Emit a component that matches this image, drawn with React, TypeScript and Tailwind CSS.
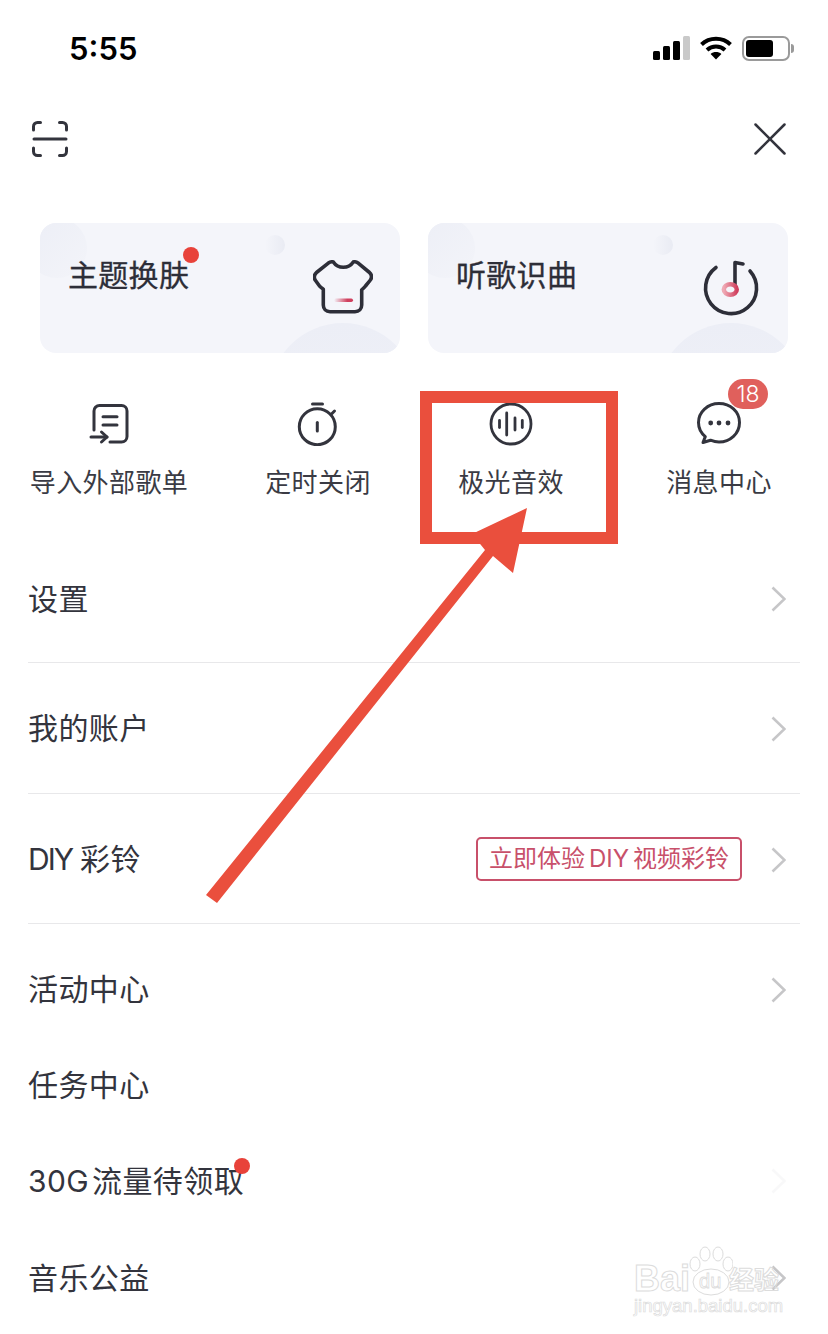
const FONT = "font-['Inter','Noto_Sans_CJK_SC',sans-serif]";

function Chevron({ faint, className = "" }: { faint?: boolean; className?: string }) {
  return (
    <svg width="15" height="26" viewBox="0 0 15 26" fill="none" className={`${faint ? "opacity-10" : ""} ${className}`}>
      <path d="M1.5 1.5 13.500 13 1.5 24.5" stroke="#c6c6c8" strokeWidth="2.6" />
    </svg>
  );
}

function StatusBar() {
  return (
    <div className="flex h-[96px] items-center justify-between pl-[69px] pr-[34px]">
      <span className="font-['Inter',sans-serif] text-[31px] font-semibold leading-none text-black">5:55</span>
      <div className="flex items-center gap-[10px]">
        <svg width="37" height="24" viewBox="0 0 37 24">
          <rect x="0" y="15" width="7" height="9" rx="1.5" fill="#000" />
          <rect x="10" y="10" width="7" height="14" rx="1.5" fill="#000" />
          <rect x="20" y="5" width="7" height="19" rx="1.5" fill="#000" />
          <rect x="30" y="0" width="7" height="24" rx="1.5" fill="#c9c9c9" />
        </svg>
        <svg width="32" height="24" viewBox="0 0 32 24" fill="none" stroke="#000" strokeWidth="4">
          <path d="M1.5 8.5C9.5 .8 22.5 .8 30.5 8.5" />
          <path d="M7 14c5-4.600 13-4.600 18 0" />
          <path d="M16 23.500 10.600 18c3-2.600 7.800-2.600 10.800 0L16 23.500z" fill="#000" stroke="none" />
        </svg>
        <div className="flex items-center">
          <div className="flex h-[25px] w-[48px] items-center rounded-[7px] border-2 border-[#9a9a9a] p-[2px]">
            <div className="h-full w-[27px] rounded-[3px] bg-black" />
          </div>
          <div className="ml-[1px] h-[9px] w-[3px] rounded-r-full bg-[#9a9a9a]" />
        </div>
      </div>
    </div>
  );
}

function TopBar() {
  return (
    <div className="flex h-[86px] items-center justify-between pl-[32px] pr-[42px]">
      <svg width="36" height="36" viewBox="0 0 36 36" fill="none" stroke="#33343d" strokeWidth="3" strokeLinecap="round">
        <path d="M1.500 9V5.500a4 4 0 0 1 4-4H8.500" />
        <path d="M27.500 1.500h3a4 4 0 0 1 4 4V9" />
        <path d="M1.500 27v3.500a4 4 0 0 0 4 4H8.500" />
        <path d="M27.500 34.500h3a4 4 0 0 0 4-4V27" />
        <path d="M2 18h32" />
      </svg>
      <svg width="32" height="32" viewBox="0 0 32 32" fill="none" stroke="#33343d" strokeWidth="2.500" strokeLinecap="round">
        <path d="M1.500 1.500 30.500 30.500" />
        <path d="M30.500 1.500 1.500 30.500" />
      </svg>
    </div>
  );
}

function ShirtIcon() {
  return (
    <svg width="60" height="54" viewBox="0 0 60 54" fill="none" className="mt-[37px]">
      <defs>
        <linearGradient id="dash" x1="0" x2="1" y1="0" y2="0">
          <stop offset="0" stopColor="#d0405e" stopOpacity="0" />
          <stop offset="0.7" stopColor="#d0405e" />
        </linearGradient>
      </defs>
      <path
        d="M20.300 2C23 6 26 7.300 30.300 7.300S37.600 6 40.300 2C42 1.300 44 2.300 45.500 3.300L56.500 12.500C59 15 59 18 57 20.500L52.500 26C51 28 49 29.500 48.700 30V45C48.700 49 46 51.700 42 51.700H17C13 51.700 10.300 49 10.300 45V29.300C10 29 8 27.500 6.500 26L2.500 20.500C.7 18 1 15 3.500 12.500L15 3.300C16.500 2.300 18.500 1.300 20.300 2Z"
        stroke="#2d2e38"
        strokeWidth="3.600"
        strokeLinejoin="round"
      />
      <rect x="21" y="38.500" width="19" height="3.500" rx="1.700" fill="url(#dash)" />
    </svg>
  );
}

function DiscIcon() {
  return (
    <svg width="62" height="62" viewBox="0 0 62 62" fill="none" className="mt-[35px] mr-[-1px]">
      <defs>
        <linearGradient id="note" x1="0" x2="1" y1="0" y2="0">
          <stop offset="0" stopColor="#efa9b4" />
          <stop offset="1" stopColor="#d0405e" />
        </linearGradient>
      </defs>
      <path d="M16 9.500A25.500 25.500 0 1 0 50 13" stroke="#2d2e38" strokeWidth="3.600" strokeLinecap="round" />
      <path d="M35 30V4.500L43 6" stroke="#2d2e38" strokeWidth="3.600" strokeLinecap="round" strokeLinejoin="round" />
      <ellipse cx="30.300" cy="31.500" rx="6.500" ry="5.200" stroke="url(#note)" strokeWidth="4.500" fill="#f4f5fa" />
    </svg>
  );
}

function FeatureCard({ title, dot, icon }: { title: string; dot?: boolean; icon: React.ReactNode }) {
  return (
    <div className="relative flex h-[130px] w-[360px] justify-between overflow-hidden rounded-[16px] bg-[#f4f5fa] pl-[28px] pr-[27px]">
      <div className="absolute left-[-13px] top-[-5px] h-[60px] w-[60px] rounded-full bg-gradient-to-br from-[#eceef6] to-[#f3f4f9]" />
      <div className="absolute left-[225px] top-[12px] h-[20px] w-[20px] rounded-full bg-gradient-to-r from-[#f4f5fa] to-[#e9ebf3]" />
      <div className="absolute left-[229px] top-[100px] h-[148px] w-[148px] rounded-full bg-gradient-to-b from-[#eceef6] to-[#f1f2f8]" />
      <div className="relative z-10 mt-[32px] self-start">
        <span className="text-[30px] leading-[40px] tracking-[0.3px] text-[#2d2e38] [-webkit-text-stroke:0.3px_#2d2e38]">{title}</span>
        {dot && <span className="absolute left-[115px] top-[-8px] h-[16px] w-[16px] rounded-full bg-[#e8423a]" />}
      </div>
      <div className="relative z-10">{icon}</div>
    </div>
  );
}

function ImportIcon() {
  return (
    <svg width="44" height="44" viewBox="0 0 44 44" fill="none" stroke="#33343d" strokeWidth="3" strokeLinecap="round" strokeLinejoin="round">
      <path d="M7 28V9a5.500 5.500 0 0 1 5.500-5.500H34.500A5.500 5.500 0 0 1 40 9V34.500A5.500 5.500 0 0 1 34.500 40H23" />
      <path d="M16 14.700H30" />
      <path d="M16 23H30" />
      <path d="M4 35H20" />
      <path d="M14.500 30 20 35 14.500 40" />
    </svg>
  );
}

function TimerIcon() {
  return (
    <svg width="44" height="44" viewBox="0 0 44 44" fill="none" stroke="#33343d" strokeWidth="3" strokeLinecap="round">
      <circle cx="21.300" cy="24.700" r="18" />
      <path d="M16.500 2H26.500" />
      <path d="M21.300 20.500V29" />
      <path d="M35 12.500 38.500 9" />
    </svg>
  );
}

function WaveIcon() {
  return (
    <svg width="44" height="44" viewBox="0 0 44 44" fill="none" stroke="#33343d" strokeWidth="2.800" strokeLinecap="round">
      <circle cx="22" cy="22" r="20" />
      <path d="M10.500 18.500V25.500" />
      <path d="M17.700 11V33" />
      <path d="M26 16V28" />
      <path d="M33.300 18.500V25.500" />
    </svg>
  );
}

function ChatIcon() {
  return (
    <svg width="44" height="44" viewBox="0 0 44 44" fill="none">
      <path
        d="M22 1.500C10.700 1.500 1.500 10 1.500 20.500c0 5.600 2.600 10.600 6.800 14.100L6 40.500l7.500-2.300c2.700 1.100 5.500 1.800 8.500 1.800 11.300 0 20.500-8.500 20.500-19.500S33.300 1.500 22 1.500z"
        stroke="#33343d"
        strokeWidth="3"
        strokeLinejoin="round"
      />
      <circle cx="13.700" cy="21" r="2.400" fill="#33343d" />
      <circle cx="22" cy="21" r="2.400" fill="#33343d" />
      <circle cx="31" cy="21" r="2.400" fill="#33343d" />
    </svg>
  );
}

function Shortcut({ label, icon, badge, className }: { label: string; icon: React.ReactNode; badge?: string; className: string }) {
  return (
    <div className={`flex flex-col items-center ${className}`}>
      <div className="relative flex h-[48px] w-[44px] items-center justify-center">
        {icon}
        {badge && (
          <span className="absolute left-[31px] top-[-21px] flex h-[30px] w-[40px] items-center justify-center rounded-full bg-[#e0605c] font-['Inter',sans-serif] text-[23px] font-light leading-none text-white">
            {badge}
          </span>
        )}
      </div>
      <span className="mt-[17px] whitespace-nowrap text-[26px] leading-[36px] tracking-[0.4px] text-[#3a3b44]">{label}</span>
    </div>
  );
}

function MenuRow({ className, children, right }: { className: string; children: React.ReactNode; right?: React.ReactNode }) {
  return (
    <div className={`flex items-center justify-between pr-[14px] ${className}`}>
      <div className="relative text-[30px] leading-[40px] tracking-[0.4px] text-[#33343d]">{children}</div>
      {right}
    </div>
  );
}

function Watermark() {
  return (
    <div className="pointer-events-none absolute left-[634px] top-[1246px] w-[152px]">
      <div className="flex items-end">
        <span className="font-['Liberation_Sans',sans-serif] text-[36px] font-bold leading-[34px] text-transparent [-webkit-text-stroke:1px_#dcdcdc]">Bai</span>
        <div className="relative ml-[-1px] h-[50px] w-[44px]">
          <svg width="44" height="50" viewBox="0 0 44 50" fill="none" stroke="#dcdcdc" strokeWidth="1">
            <ellipse cx="16" cy="8" rx="5" ry="7" />
            <ellipse cx="29" cy="8" rx="5" ry="7" />
            <ellipse cx="6" cy="18" rx="5" ry="7" />
            <ellipse cx="39" cy="18" rx="5" ry="7" />
            <ellipse cx="22" cy="36" rx="18" ry="13" fill="#fff" />
          </svg>
          <span className="absolute left-[10px] top-[24px] font-['Liberation_Sans',sans-serif] text-[20px] leading-[22px] text-transparent [-webkit-text-stroke:0.8px_#dcdcdc]">du</span>
        </div>
        <span className="ml-[-4px] whitespace-nowrap text-[25px] font-bold leading-[32px] text-transparent [-webkit-text-stroke:1px_#dcdcdc]">经验</span>
      </div>
      <div className="whitespace-nowrap font-['Liberation_Sans',sans-serif] text-[18.500px] leading-[20px] text-transparent [-webkit-text-stroke:0.7px_#dcdcdc]">
        jingyan.baidu.com
      </div>
    </div>
  );
}

export default function App() {
  return (
    <div className={`relative h-[1334px] w-[828px] overflow-hidden bg-white ${FONT}`}>
      <StatusBar />
      <TopBar />

      <div className="mt-[41px] flex gap-[28px] px-[40px]">
        <FeatureCard title="主题换肤" dot icon={<ShirtIcon />} />
        <FeatureCard title="听歌识曲" icon={<DiscIcon />} />
      </div>

      <div className="mt-[47px] flex">
        <Shortcut className="w-[218px]" label="导入外部歌单" icon={<ImportIcon />} />
        <Shortcut className="w-[200px]" label="定时关闭" icon={<TimerIcon />} />
        <Shortcut className="w-[186px]" label="极光音效" icon={<WaveIcon />} />
        <Shortcut className="w-[224px] pl-[6px]" label="消息中心" icon={<ChatIcon />} badge="18" />
      </div>

      <div className="mt-[35px] px-[28px]">
        <MenuRow className="h-[126px] border-b border-[#e8e8ea] box-content" right={<Chevron />}>设置</MenuRow>
        <MenuRow className="h-[130px] border-b border-[#e8e8ea] box-content" right={<Chevron className="mt-[2px]" />}>我的账户</MenuRow>
        <MenuRow
          className="h-[129px] border-b border-[#e8e8ea] box-content"
          right={
            <div className="flex items-center gap-[29px]">
              <span className="flex h-[44px] w-[266px] items-center justify-center rounded-[5px] border-2 border-[#c8506a] text-[24px] leading-none text-[#c8506a]">
                立即体验<span className="mx-[4px]">DIY</span>视频彩铃
              </span>
              <Chevron className="mt-[2px]" />
            </div>
          }
        >
          <span className="mr-[8px] tracking-[-2px]">DIY</span>彩铃
        </MenuRow>
        <div className="pt-[17px]">
          <MenuRow className="h-[96px]" right={<Chevron className="mt-[2px]" />}>活动中心</MenuRow>
          <MenuRow className="h-[96px]">任务中心</MenuRow>
          <MenuRow className="h-[96px]" right={<Chevron faint />}>
            <span className="mr-[3px]">30G</span>流量待领取
            <span className="absolute left-[206px] top-[-3px] h-[16px] w-[16px] rounded-full bg-[#e8423a]" />
          </MenuRow>
          <MenuRow className="mt-[1px] h-[96px]" right={<Chevron />}>音乐公益</MenuRow>
        </div>
      </div>

      <Watermark />

      {/* annotation drawn over the screenshot */}
      <div className="absolute left-[420px] top-[391px] h-[153px] w-[198px] border-[12px] border-[#ea4f3d]" />
      <svg className="absolute left-0 top-0" width="828" height="1334" viewBox="0 0 828 1334">
        <polygon points="527,508 513,573 493,556 217,903 206,895 485,550 472,534" fill="#ea4f3d" />
      </svg>
    </div>
  );
}
